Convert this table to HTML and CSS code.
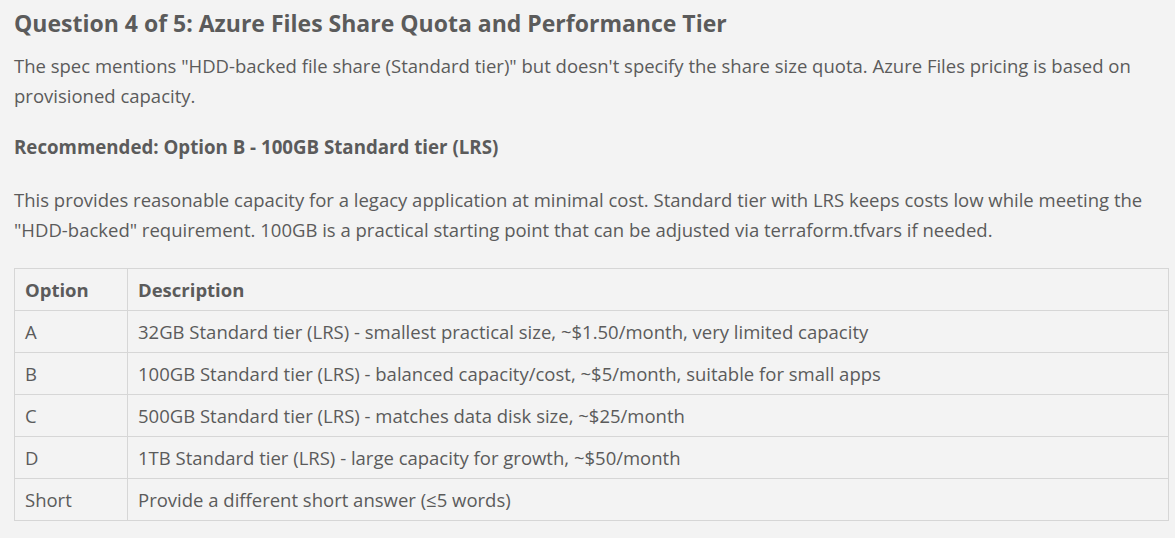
FILE: index.html
```html
<!DOCTYPE html>
<html>
<head>
<meta charset="utf-8">
<link rel="stylesheet" href="styles.css">
</head>
<body>
<div class="page">
  <h2 class="title">Question 4 of 5: Azure Files Share Quota and Performance Tier</h2>
  <p class="text intro">The spec mentions "HDD-backed file share (Standard tier)" but doesn't specify the share size quota. Azure Files pricing is based on provisioned capacity.</p>
  <p class="text rec"><strong>Recommended: Option B - 100GB Standard tier (LRS)</strong></p>
  <p class="text why">This provides reasonable capacity for a legacy application at minimal cost. Standard tier with LRS keeps costs low while meeting the "HDD-backed" requirement. 100GB is a practical starting point that can be adjusted via terraform.tfvars if needed.</p>
  <table class="opts">
    <thead>
      <tr><th class="c1">Option</th><th>Description</th></tr>
    </thead>
    <tbody>
      <tr><td>A</td><td>32GB Standard tier (LRS) - smallest practical size, ~$1.50/month, very limited capacity</td></tr>
      <tr><td>B</td><td>100GB Standard tier (LRS) - balanced capacity/cost, ~$5/month, suitable for small apps</td></tr>
      <tr><td>C</td><td>500GB Standard tier (LRS) - matches data disk size, ~$25/month</td></tr>
      <tr><td>D</td><td>1TB Standard tier (LRS) - large capacity for growth, ~$50/month</td></tr>
      <tr><td>Short</td><td>Provide a different short answer (≤5 words)</td></tr>
    </tbody>
  </table>
</div>
</body>
</html>
```
FILE: styles.css
```css
html, body {
  margin: 0;
  padding: 0;
  background: #f3f3f3;
}
.page {
  padding: 7px 6px 0 14px;
  font-family: "Open Sans", "Noto Sans", sans-serif;
  color: #5b5b5b;
  font-size: 18.5px;
}
.title {
  margin: 0;
  font-size: 23px;
  font-weight: 700;
  line-height: 32px;
}
.text {
  margin: 0;
  line-height: 30px;
}
.intro {
  margin-top: 12px;
}
.rec {
  margin-top: 21px;
}
.rec strong {
  font-size: 18.7px;
}
.why {
  margin-top: 23px;
}
.opts {
  margin-top: 23px;
  width: 100%;
  border-collapse: collapse;
}
.opts th, .opts td {
  border: 1px solid #d6d6d6;
  height: 41px;
  padding: 0 10px;
  text-align: left;
  line-height: 24px;
}
.opts th {
  font-weight: 700;
}
.opts .c1 {
  width: 92px;
}
```
